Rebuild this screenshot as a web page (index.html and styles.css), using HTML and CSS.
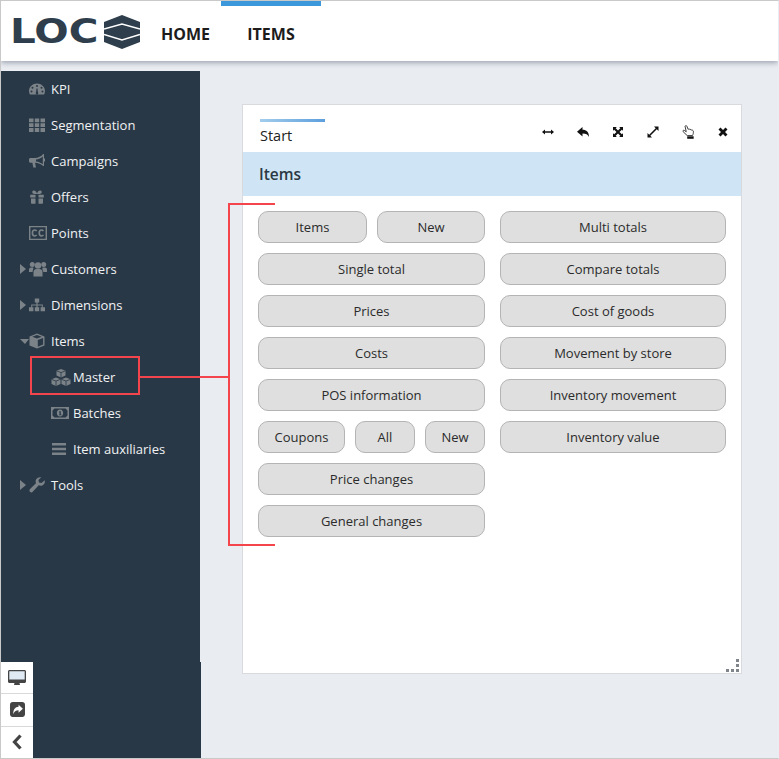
FILE: index.html
```html
<!DOCTYPE html>
<html lang="en">
<head>
<meta charset="UTF-8" />
<title>LOC - Items</title>
<link rel="stylesheet" href="styles.css">
</head>
<body>
<div class="page">

  <header class="topbar">
    <div class="logo">
      <span class="logo-text">LOC</span>
      <svg class="logo-mark" width="36" height="34" viewBox="0 0 36 34">
        <path fill="#2f3e4c" d="M18 0 36 7v20L18 34 0 27V7z"/>
        <path fill="none" stroke="#fff" stroke-width="1.600" d="M0 14 18 9l18 5M0 19.500 18 25l18-5.500"/>
      </svg>
    </div>
    <nav class="topnav">
      <a class="topnav-link">HOME</a>
      <a class="topnav-link active">ITEMS</a>
    </nav>
  </header>

  <div class="shell">
    <aside class="sidebar">
      <ul class="menu">
        <li class="menu-item">
          <span class="caret"></span>
          <svg class="icon" viewBox="0 0 16 16"><path fill-rule="evenodd" d="M8 2.500c4.400 0 8 3.300 8 7.500 0 1.300-.3 2.500-.9 3.500H.9C.3 12.500 0 11.300 0 10c0-4.200 3.600-7.500 8-7.500zM8 4a1 1 0 1 0 0 2 1 1 0 0 0 0-2zM3.500 5.800a1 1 0 1 0 0 2 1 1 0 0 0 0-2zM12.500 5.800a1 1 0 1 0 0 2 1 1 0 0 0 0-2zM2.500 9.500a1 1 0 1 0 0 2 1 1 0 0 0 0-2zM13.500 9.500a1 1 0 1 0 0 2 1 1 0 0 0 0-2zM7.500 7.500l-.4 3.600a1.300 1.300 0 1 0 1.800 0L8.500 7.500z"/></svg>
          <span>KPI</span>
        </li>
        <li class="menu-item">
          <span class="caret"></span>
          <svg class="icon" viewBox="0 0 16 16"><path d="M0 1.500h4.500v3.800H0zM5.800 1.500h4.400v3.800H5.800zM11.500 1.500H16v3.800h-4.500zM0 6.300h4.500v3.800H0zM5.800 6.300h4.400v3.800H5.800zM11.500 6.300H16v3.800h-4.500zM0 11.100h4.500v3.800H0zM5.800 11.100h4.400v3.800H5.800zM11.500 11.100H16v3.800h-4.500z"/></svg>
          <span>Segmentation</span>
        </li>
        <li class="menu-item">
          <span class="caret"></span>
          <svg class="icon" viewBox="0 0 16 16"><path fill-rule="evenodd" d="M15 1v12h-.8c-2-2-5-3-8.200-3.200L7 14.500H4.300L3.400 9.800H1.500C.7 9.800 0 9 0 8.200V6.400C0 5.600.7 5 1.500 5H6c3.200-.2 6.200-1.500 8.200-4zM13.800 3.500C12 5.200 9.600 6.200 7 6.500v2c2.600.3 5 1.200 6.800 2.800z"/><path d="M15 5.500h1v3h-1z"/></svg>
          <span>Campaigns</span>
        </li>
        <li class="menu-item">
          <span class="caret"></span>
          <svg class="icon" viewBox="0 0 16 16"><path d="M1.200 5.800h5.300v2.700H1.200zM9.500 5.800h5.300v2.700H9.500zM2 9.500h4.500v5.200H3c-.6 0-1-.4-1-1zM9.500 9.500H14v4.200c0 .6-.4 1-1 1H9.500zM5 1.500c1.300 0 2.200 1.300 3 3 .8-1.700 1.700-3 3-3 1.100 0 1.800.7 1.800 1.600 0 1.200-1 1.900-2.300 1.900h-5C4.200 5 3.200 4.300 3.200 3.100c0-.9.700-1.600 1.800-1.600z"/></svg>
          <span>Offers</span>
        </li>
        <li class="menu-item">
          <span class="caret"></span>
          <svg class="icon icon-wide" viewBox="0 0 19 15"><path fill-rule="evenodd" d="M0 0h19v15H0zM1.500 1.500v12h16v-12z"/><path fill="none" stroke="currentColor" stroke-width="1.700" d="M8 5.500C7.500 4.700 6.800 4.400 6 4.400 4.600 4.400 3.600 5.600 3.600 7.500s1 3.100 2.400 3.100c.8 0 1.500-.3 2-1.100M15.200 5.500c-.5-.8-1.200-1.100-2-1.100-1.400 0-2.400 1.200-2.400 3.100s1 3.100 2.400 3.100c.8 0 1.500-.3 2-1.100"/></svg>
          <span>Points</span>
        </li>
        <li class="menu-item">
          <span class="caret closed"></span>
          <svg class="icon icon-wide" viewBox="0 0 18 16"><circle cx="9" cy="4.500" r="3.200"/><circle cx="3.300" cy="3.500" r="2.500"/><circle cx="14.700" cy="3.500" r="2.500"/><path d="M4.500 15.500V11c0-2 1.500-3 3-3h3c1.500 0 3 1 3 3v4.500zM0 11V8.500C0 7.300 1 6.500 2 6.500h2.300C4.800 7.500 3.800 8.500 3.500 11zM18 11V8.500c0-1.200-1-2-2-2h-2.300c-.5 1-.5 2 .8 4.500z"/></svg>
          <span>Customers</span>
        </li>
        <li class="menu-item">
          <span class="caret closed"></span>
          <svg class="icon" viewBox="0 0 16 16"><path d="M5.800 1.500h4.400v4H8.600v2h5.200v2.800H16v4h-4.400v-4h1.200V8.500H8.600v1.800h1.600v4H5.800v-4h1.600V8.500H3.200v1.800h1.200v4H0v-4h2.200V7.500h5.200v-2H5.800z"/></svg>
          <span>Dimensions</span>
        </li>
        <li class="menu-item">
          <span class="caret open"></span>
          <svg class="icon" viewBox="0 0 16 16"><path fill-rule="evenodd" d="M8 .5 15.500 3.500v9L8 15.500.5 12.500v-9zM8 2 3.300 3.800 8 5.600l4.700-1.800zM8.800 7v6.800l5.300-2.200V4.900z"/></svg>
          <span>Items</span>
        </li>
        <li class="menu-item sub">
          <svg class="icon icon-large" viewBox="0 0 20 17"><path d="M10 0l4.500 1.800v4.800L10 8.400 5.500 6.600V1.800zM5 8.500l4.500 1.800v4.800L5 16.900.5 15.100v-4.800zM15 8.500l4.500 1.800v4.800L15 16.900l-4.500-1.800v-4.800z"/><path fill="none" stroke="#293846" stroke-width=".8" d="M5.500 1.800 10 3.600l4.500-1.800M10 3.600v4.800M.5 10.300 5 12.100l4.500-1.800M5 12.100v4.800M10.500 10.300l4.500 1.800 4.500-1.800M15 12.100v4.800"/></svg>
          <span>Master</span>
        </li>
        <li class="menu-item sub">
          <svg class="icon icon-wide" viewBox="0 0 18 12"><path fill-rule="evenodd" d="M0 0h18v12H0zM3.500 1.500 1.500 3.500v5l2 2h11l2-2v-5l-2-2z"/><path fill-rule="evenodd" d="M9 2.500c1.900 0 3.200 1.600 3.200 3.500S10.900 9.500 9 9.500 5.800 7.900 5.800 6 7.100 2.500 9 2.500zM8 4.500v1h.6v2H8v.7h2.500v-.7h-.7V4.200H9z"/></svg>
          <span>Batches</span>
        </li>
        <li class="menu-item sub">
          <svg class="icon" viewBox="0 0 16 16"><path d="M1 2h14v2.400H1zM1 6.800h14v2.400H1zM1 11.600h14V14H1z"/></svg>
          <span>Item auxiliaries</span>
        </li>
        <li class="menu-item">
          <span class="caret closed"></span>
          <svg class="icon" viewBox="0 0 16 16"><path fill-rule="evenodd" d="M15.700 3.200c.5 2-.3 4-2 5-1.300.7-2.800.7-4 .1L3.700 14.800c-.8.800-2 .8-2.700 0-.8-.7-.7-1.900 0-2.700L7 6.300C6.400 5 6.500 3.600 7.200 2.300 8.300.6 10.300-.2 12.300.3L9.500 3l.5 2.500 2.500.6z"/></svg>
          <span>Tools</span>
        </li>
      </ul>
      <div class="side-foot">
        <div class="side-tools">
          <button class="side-tool">
            <svg width="18" height="16" viewBox="0 0 18 16"><path fill="#dfeaf5" d="M1 1h16v9H1z"/><path fill="#444" fill-rule="evenodd" d="M1.500 0h15C17.300 0 18 .7 18 1.500v10c0 .8-.7 1.500-1.500 1.500H11.500l.5 2H6l.5-2H1.500C.7 13 0 12.300 0 11.500v-10C0 .7.700 0 1.500 0zM1.300 1.300v8.200h15.400V1.300z"/></svg>
          </button>
          <button class="side-tool">
            <svg width="15" height="15" viewBox="0 0 14 14"><path fill="#444" fill-rule="evenodd" d="M2.500 0h9C12.900 0 14 1.100 14 2.500v9c0 1.400-1.100 2.500-2.500 2.500h-9C1.100 14 0 12.900 0 11.500v-9C0 1.100 1.100 0 2.500 0zM8 2.500v2C4.800 4.700 3 6.800 3 11.500c.8-2.500 2.500-3.700 5-3.700v2.200l4-3.700z"/></svg>
          </button>
          <button class="side-tool">
            <svg width="10" height="16" viewBox="0 0 10 16"><path fill="none" stroke="#444" stroke-width="3.200" d="M8.500 1.500 2.500 8l6 6.500"/></svg>
          </button>
        </div>
      </div>
    </aside>

    <main class="content">
      <section class="panel">
        <div class="panel-head">
          <div class="tab">
            <span class="tab-line"></span>
            <span class="tab-label">Start</span>
          </div>
          <div class="tools">
            <svg class="tool" viewBox="0 0 12 12"><path d="M0 6 3 3.500v1.800h6V3.500L12 6 9 8.500V6.700H3v1.800z"/></svg>
            <svg class="tool" viewBox="0 0 12 12"><path d="M5.500 1v2.800c4 0 6.500 2.200 6.500 7.200-1-2.500-3-3.500-6.500-3.500v3L0 5.800z"/></svg>
            <svg class="tool" viewBox="0 0 12 12"><path d="M1 1h3.800L3.700 2.200 6 4.500l2.300-2.300L7.200 1H11v3.800L9.800 3.700 7.500 6l2.300 2.300L11 7.200V11H7.200l1.100-1.200L6 7.500 3.700 9.800 4.800 11H1V7.200l1.200 1.100L4.500 6 2.200 3.700 1 4.800z"/></svg>
            <svg class="tool" viewBox="0 0 12 12"><path d="M7 .5h4.500V5L9.800 3.300 3.300 9.800 5 11.500H.5V7l1.700 1.700 6.500-6.500z"/></svg>
            <svg class="tool" viewBox="0 0 12 13"><path fill="#fff" stroke="#222" stroke-width=".8" d="M2.800 1.200c.3-.9 1.500-.8 1.800.1l1 2.700c.7-.4 1.400-.2 1.800.3.600-.3 1.200-.1 1.500.4.700-.1 1.500.4 1.600 1.100.2 1.500-.2 2.900-.8 4H4.800L1 6.200c-.6-.8.300-1.700 1.100-1.200l1.800 1.300z"/><path d="M4.800 10.500h6v2.300h-6z"/></svg>
            <svg class="tool" viewBox="0 0 12 12"><path d="M3.500 1.500 6 4l2.500-2.500 2 2L8 6l2.500 2.500-2 2L6 8l-2.500 2.500-2-2L4 6 1.500 3.500z"/></svg>
          </div>
        </div>
        <h2 class="band">Items</h2>
        <div class="board">
          <div class="col">
            <div class="row">
              <a class="btn w-items">Items</a>
              <a class="btn w-new">New</a>
            </div>
            <a class="btn">Single total</a>
            <a class="btn">Prices</a>
            <a class="btn">Costs</a>
            <a class="btn">POS information</a>
            <div class="row">
              <a class="btn w-coupons">Coupons</a>
              <a class="btn w-small">All</a>
              <a class="btn w-small">New</a>
            </div>
            <a class="btn">Price changes</a>
            <a class="btn">General changes</a>
          </div>
          <div class="col">
            <a class="btn">Multi totals</a>
            <a class="btn">Compare totals</a>
            <a class="btn">Cost of goods</a>
            <a class="btn">Movement by store</a>
            <a class="btn">Inventory movement</a>
            <a class="btn">Inventory value</a>
          </div>
        </div>
        <div class="grip">
          <i></i><i></i><i></i><i></i><i></i>
        </div>
      </section>
    </main>
  </div>

  <!-- red callout drawn over the screenshot -->
  <div class="callout-box"></div>
  <div class="callout-link"></div>
  <div class="callout-bracket"></div>
</div>
</body>
</html>
```

FILE: styles.css
```css
* { box-sizing: border-box; }
html, body { margin: 0; padding: 0; }
body { background: #e9ecf1; font-family: 'Open Sans', sans-serif; color: #2b2b2b; }
ul { list-style: none; margin: 0; padding: 0; }

.page { position: relative; width: 779px; height: 759px; overflow: hidden; border: 1px solid #c9c9c9; border-right-color: #e9ecf1; display: flex; flex-direction: column; }

.topbar { height: 60px; flex: none; background: #fff; display: flex; align-items: center; box-shadow: 0 2px 5px rgba(70, 80, 100, .45); position: relative; }
.logo { display: flex; align-items: center; margin-left: 9px; width: 151px; }
.logo-text { font-family: 'DejaVu Sans', sans-serif; font-weight: bold; font-size: 34px; color: #2f3e4c; line-height: 1; width: 94px; transform: scaleX(1.19); transform-origin: left center; }
.logo-mark { display: block; margin-top: 1px; }
.topnav { display: flex; align-self: stretch; }
.topnav-link { font-size: 16px; font-weight: 700; color: #1c1c1c; display: flex; align-items: center; border-top: 5px solid transparent; }
.topnav-link:first-child { width: 60px; }
.topnav-link.active { width: 100px; justify-content: center; border-top-color: #3d97db; }

.shell { flex: 1; display: flex; min-height: 0; padding-top: 10px; }

.sidebar { width: 199px; flex: none; background: #293846; color: #f0f2f4; display: flex; flex-direction: column; }
.menu { flex: 1; }
.menu-item { height: 36px; display: flex; align-items: center; padding-left: 19px; font-size: 13px; }
.menu-item.sub { padding-left: 50px; }
.caret { width: 9px; flex: none; height: 0; }
.caret.closed { border-left: 6px solid #7b8288; border-right: 3px solid transparent; border-top: 5px solid transparent; border-bottom: 5px solid transparent; height: 10px; }
.caret.open { border-top: 5px solid #7b8288; border-left: 5px solid transparent; border-right: 4px solid transparent; height: 5px; }
.icon { width: 16px; height: 16px; margin-right: 6px; fill: #7b8288; color: #7b8288; flex: none; }
.icon-wide { width: 18px; margin-right: 4px; }
.icon-large { width: 20px; height: 17px; margin-right: 2px; }

.side-foot { height: 96px; flex: none; margin-right: -1px; background: #293846; position: relative; z-index: 1; }
.side-tools { width: 32px; background: #d9d9d9; display: flex; flex-direction: column; gap: 1px; height: 100%; }
.side-tool { flex: 1; border: none; padding: 0; background: #fff; display: flex; align-items: center; justify-content: center; }

.content { flex: 1; padding: 33px 0 0 42px; }
.panel { position: relative; width: 500px; height: 570px; background: #fff; border: 1px solid #d9dadd; }
.panel-head { height: 47px; display: flex; justify-content: space-between; }
.tab { margin-left: 17px; padding-top: 14px; width: 65px; }
.tab-line { display: block; height: 3px; background: linear-gradient(to right, #a3cdec, #5c9fdd); }
.tab-label { display: block; margin-top: 4px; font-size: 14.500px; color: #222; }
.tools { display: flex; gap: 23px; padding: 21px 12px 0 0; }
.tool { width: 12px; height: 12px; fill: #111; }
.tool:nth-child(5) { width: 13px; height: 14px; margin: -1px -1px 0 0; }
.band { margin: 0; height: 44px; background: #cfe5f6; padding-left: 16px; font-size: 15.500px; font-weight: 600; line-height: 44px; color: #2b3844; }
.board { display: grid; grid-template-columns: 227px 226px; column-gap: 15px; padding: 15px 0 0 15px; }
.col { display: flex; flex-direction: column; gap: 10px; }
.row { display: flex; gap: 10px; }
.btn { height: 32px; display: flex; align-items: center; justify-content: center; background: #dfdfdf; border: 1px solid #b4b4b4; border-radius: 10px; font-size: 13px; color: #2b2b2b; }
.w-items { width: 109px; }
.w-new { width: 108px; }
.w-coupons { width: 87px; }
.w-small { width: 60px; }

.grip { position: absolute; right: 1px; bottom: 1px; width: 14px; height: 13px; display: grid; grid-template-columns: repeat(3, 3px); grid-template-rows: repeat(3, 3px); gap: 2px; }
.grip i { background: #80858b; }
.grip i:nth-child(1) { grid-column: 3; grid-row: 1; }
.grip i:nth-child(2) { grid-column: 3; grid-row: 2; }
.grip i:nth-child(3) { grid-column: 1; grid-row: 3; }
.grip i:nth-child(4) { grid-column: 2; grid-row: 3; }
.grip i:nth-child(5) { grid-column: 3; grid-row: 3; }

.callout-box { position: absolute; left: 29px; top: 355px; width: 110px; height: 39px; border: 2px solid #f4444c; }
.callout-link { position: absolute; left: 138px; top: 375px; width: 91px; height: 2px; background: #f4444c; }
.callout-bracket { position: absolute; left: 227px; top: 202px; width: 47px; height: 343px; border: 2px solid #f4444c; border-right: none; }
```
